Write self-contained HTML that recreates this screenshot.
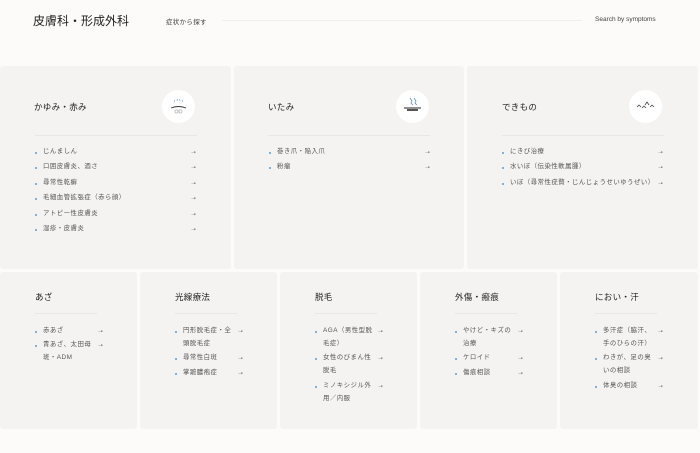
<!DOCTYPE html>
<html><head><meta charset="utf-8"><style>
*{margin:0;padding:0;box-sizing:border-box}
body{width:700px;height:453px;background:#fcfbfa;font-family:"Liberation Sans","Noto Sans CJK JP",sans-serif;color:#333;position:relative;overflow:hidden}
.a{position:absolute}
.card{position:absolute;background:#f4f3f2;border-radius:3px}
.t{position:absolute;font-size:8.5px;color:#222;letter-spacing:.3px}
.hr{position:absolute;height:1px;background:#e9e7e5}
.ic{position:absolute;width:33px;height:33px;border-radius:50%;background:#fff}
.li{position:absolute;font-size:6.4px;color:#555;line-height:12.5px;letter-spacing:.5px}
.li:before{content:"";position:absolute;left:-8px;top:5.5px;width:2.2px;height:2.2px;background:#5b9bd5;border-radius:50%}
.ar{position:absolute;font-size:6px;color:#666}
</style></head><body>
<div class="a" style="left:33px;top:12px;font-size:12px;color:#222">皮膚科・形成外科</div>
<div class="a" style="left:166px;top:16px;font-size:6.5px;color:#444;letter-spacing:.3px">症状から探す</div>
<div class="hr" style="left:222px;top:20px;width:360px;background:#f0eeec"></div>
<div class="a" style="left:595px;top:16px;font-size:6.5px;color:#444">Search by symptoms</div>

<div class="card" style="left:0;top:66px;width:231px;height:203px"></div>
<div class="card" style="left:234px;top:66px;width:230px;height:203px"></div>
<div class="card" style="left:467px;top:66px;width:231px;height:203px"></div>

<div class="t" style="left:34px;top:101px">かゆみ・赤み</div>
<div class="t" style="left:268px;top:101px">いたみ</div>
<div class="t" style="left:502px;top:101px">できもの</div>
<div class="ic" style="left:162px;top:90px"><svg width="33" height="33"><g stroke="#7a9cc0" stroke-width=".6"><path d="M12 12l1-2M15 11l.5-2M18 11l-.5-2M21 12l-1-2"/></g><path d="M9 18q7.5-3 15 0" stroke="#333" fill="none" stroke-width=".9"/><text x="16.5" y="23" font-size="4" text-anchor="middle" fill="#333">◎◎</text></svg></div>
<div class="ic" style="left:396px;top:90px"><svg width="33" height="33"><path d="M14 8l2 3-1 2 2 2M18 8l2 3-1 2 2 2" stroke="#5b8fc5" fill="none" stroke-width=".8"/><path d="M8 18h17" stroke="#222" stroke-width=".9"/><path d="M11 19h11v2h-11z" fill="#555"/></svg></div>
<div class="ic" style="left:629px;top:90px"><svg width="33" height="33"><path d="M8 17l2-2 2 2M13 18l2-2 2 2M16 15l2-3 2 3M21 17l2-2 2 2" stroke="#333" fill="none" stroke-width=".7"/></svg></div>

<div class="hr" style="left:35px;top:135px;width:162px"></div>
<div class="hr" style="left:268px;top:135px;width:162px"></div>
<div class="hr" style="left:502px;top:135px;width:162px"></div>

<div class="li" style="left:43px;top:146px">じんましん</div><div class="ar" style="left:191px;top:149px">➝</div>
<div class="li" style="left:43px;top:161px">口囲皮膚炎、酒さ</div><div class="ar" style="left:191px;top:164px">➝</div>
<div class="li" style="left:43px;top:177px">尋常性乾癬</div><div class="ar" style="left:191px;top:180px">➝</div>
<div class="li" style="left:43px;top:192px">毛細血管拡張症（赤ら顔）</div><div class="ar" style="left:191px;top:195px">➝</div>
<div class="li" style="left:43px;top:208px">アトピー性皮膚炎</div><div class="ar" style="left:191px;top:211px">➝</div>
<div class="li" style="left:43px;top:223px">湿疹・皮膚炎</div><div class="ar" style="left:191px;top:226px">➝</div>

<div class="li" style="left:277px;top:146px">巻き爪・陥入爪</div><div class="ar" style="left:425px;top:149px">➝</div>
<div class="li" style="left:277px;top:161px">粉瘤</div><div class="ar" style="left:425px;top:164px">➝</div>

<div class="li" style="left:510px;top:146px">にきび治療</div><div class="ar" style="left:658px;top:149px">➝</div>
<div class="li" style="left:510px;top:161px">水いぼ（伝染性軟属腫）</div><div class="ar" style="left:658px;top:164px">➝</div>
<div class="li" style="left:510px;top:177px">いぼ（尋常性疣贅・じんじょうせいゆうぜい）</div><div class="ar" style="left:658px;top:180px">➝</div>

<div class="card" style="left:0;top:272px;width:137px;height:157px"></div>
<div class="card" style="left:140px;top:272px;width:137px;height:157px"></div>
<div class="card" style="left:280px;top:272px;width:137px;height:157px"></div>
<div class="card" style="left:420px;top:272px;width:137px;height:157px"></div>
<div class="card" style="left:560px;top:272px;width:138px;height:157px"></div>

<div class="t" style="left:35px;top:291px">あざ</div>
<div class="t" style="left:175px;top:291px">光線療法</div>
<div class="t" style="left:315px;top:291px">脱毛</div>
<div class="t" style="left:455px;top:291px">外傷・瘢痕</div>
<div class="t" style="left:595px;top:291px">におい・汗</div>
<div class="hr" style="left:35px;top:313px;width:62px"></div>
<div class="hr" style="left:175px;top:313px;width:62px"></div>
<div class="hr" style="left:315px;top:313px;width:62px"></div>
<div class="hr" style="left:455px;top:313px;width:62px"></div>
<div class="hr" style="left:595px;top:313px;width:62px"></div>

<div class="li" style="left:43px;top:325px;width:50px">赤あざ</div><div class="ar" style="left:98px;top:328px">➝</div>
<div class="li" style="left:43px;top:339px;width:50px">青あざ、太田母斑・ADM</div><div class="ar" style="left:98px;top:342px">➝</div>

<div class="li" style="left:183px;top:325px;width:50px">円形脱毛症・全頭脱毛症</div><div class="ar" style="left:238px;top:328px">➝</div>
<div class="li" style="left:183px;top:352px;width:50px">尋常性白斑</div><div class="ar" style="left:238px;top:355px">➝</div>
<div class="li" style="left:183px;top:367px;width:50px">掌蹠膿疱症</div><div class="ar" style="left:238px;top:370px">➝</div>

<div class="li" style="left:323px;top:325px;width:50px">AGA（男性型脱毛症）</div><div class="ar" style="left:378px;top:328px">➝</div>
<div class="li" style="left:323px;top:352px;width:50px">女性のびまん性脱毛</div><div class="ar" style="left:378px;top:355px">➝</div>
<div class="li" style="left:323px;top:380px;width:50px">ミノキシジル外用／内服</div><div class="ar" style="left:378px;top:383px">➝</div>

<div class="li" style="left:463px;top:325px;width:50px">やけど・キズの治療</div><div class="ar" style="left:518px;top:328px">➝</div>
<div class="li" style="left:463px;top:352px;width:50px">ケロイド</div><div class="ar" style="left:518px;top:355px">➝</div>
<div class="li" style="left:463px;top:367px;width:50px">傷痕相談</div><div class="ar" style="left:518px;top:370px">➝</div>

<div class="li" style="left:603px;top:325px;width:50px">多汗症（脇汗、手のひらの汗）</div><div class="ar" style="left:658px;top:328px">➝</div>
<div class="li" style="left:603px;top:352px;width:50px">わきが、足の臭いの相談</div><div class="ar" style="left:658px;top:355px">➝</div>
<div class="li" style="left:603px;top:380px;width:50px">体臭の相談</div><div class="ar" style="left:658px;top:383px">➝</div>
</body></html>
